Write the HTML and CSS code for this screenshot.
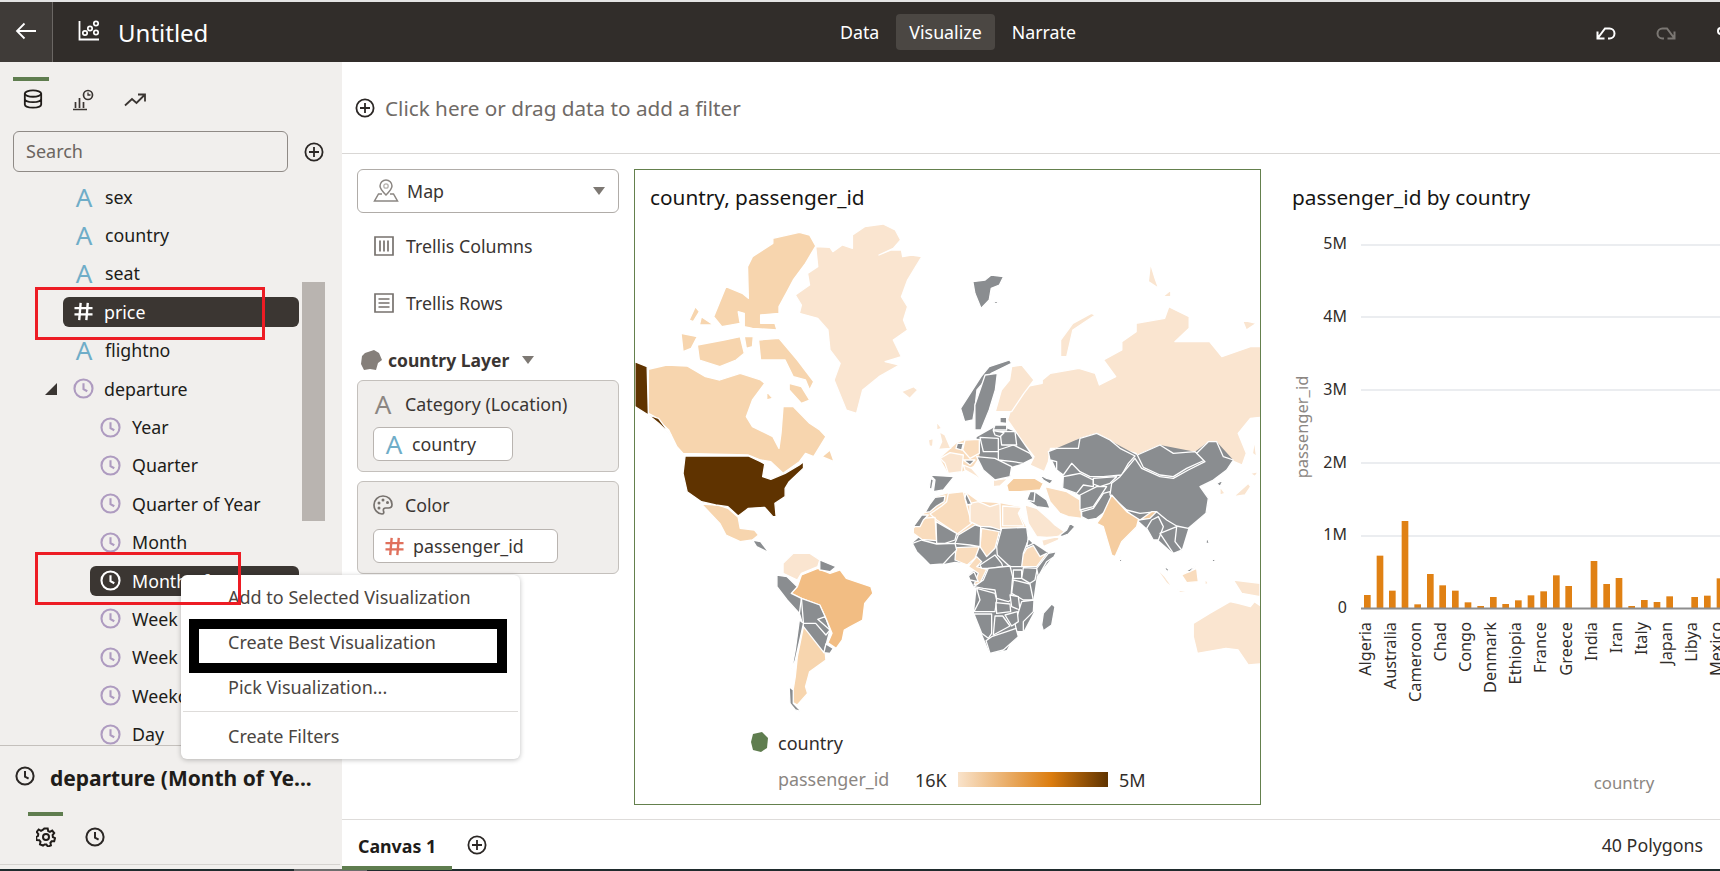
FILE: index.html
```html
<!DOCTYPE html>
<html lang="en">
<head>
<meta charset="utf-8">
<title>Untitled</title>
<link rel="stylesheet" href="styles.css">
</head>
<body>
<svg class="defs" width="0" height="0">
  <defs>
    <symbol id="clock" viewBox="0 0 20 20"><circle cx="10" cy="10" r="8.6" fill="none" stroke="currentColor" stroke-width="2"/><path d="M10 5v5.600l3.600 2" fill="none" stroke="currentColor" stroke-width="2"/></symbol>
    <symbol id="plus" viewBox="0 0 20 20"><circle cx="10" cy="10" r="8.600" fill="none" stroke="currentColor" stroke-width="1.800"/><path d="M10 5v10M5 10h10" fill="none" stroke="currentColor" stroke-width="1.800"/></symbol>
    <symbol id="hash" viewBox="0 0 20 20"><path d="M7 1 5.500 19M14.500 1 13 19M0.500 6.500h19M0.500 13h19" fill="none" stroke="currentColor" stroke-width="2.500"/></symbol>
  </defs>
</svg>
<div class="app">
  <div class="topline"></div>
  <header class="header">
    <button class="back" aria-label="Back"><svg width="24" height="20" viewBox="0 0 24 20"><path d="M22 10H3M10.500 2.500 3 10l7.500 7.500" fill="none" stroke="#fff" stroke-width="1.800"/></svg></button>
    <div class="brand">
      <svg width="22" height="22" viewBox="0 0 22 22"><path d="M1.500 1v18.500H21" fill="none" stroke="#fff" stroke-width="1.800"/><circle cx="7" cy="13" r="2.200" fill="none" stroke="#fff" stroke-width="1.700"/><circle cx="12" cy="8.500" r="2.200" fill="none" stroke="#fff" stroke-width="1.700"/><circle cx="18" cy="3.500" r="2.200" fill="none" stroke="#fff" stroke-width="1.700"/><circle cx="18" cy="12.500" r="2.200" fill="none" stroke="#fff" stroke-width="1.700"/></svg>
      <span class="doc-title">Untitled</span>
    </div>
    <nav class="modes">
      <span class="mode">Data</span>
      <span class="mode mode-on">Visualize</span>
      <span class="mode">Narrate</span>
    </nav>
    <div class="tools">
      <svg width="20" height="14" viewBox="0 0 20 14"><path d="M1.500 5.500v7h7M1.500 12.500 9 2.500h4.500a4.500 4.500 0 0 1 0 10H12" fill="none" stroke="#fff" stroke-width="2"/></svg>
      <svg width="20" height="14" viewBox="0 0 20 14"><path d="M18.500 5.500v7h-7M18.500 12.500 11 2.500H6.500a4.500 4.500 0 0 0 0 10H8" fill="none" stroke="#7b7773" stroke-width="2"/></svg>
      <svg class="more" width="12" height="14" viewBox="0 0 12 14"><circle cx="5" cy="5" r="3" fill="none" stroke="#fff" stroke-width="2"/></svg>
    </div>
  </header>

  <div class="body">
    <aside class="sidebar">
      <div class="side-tabs">
        <span class="side-tab side-tab-on"><svg width="20" height="20" viewBox="0 0 22 22"><ellipse cx="11" cy="5" rx="9" ry="3.500" fill="none" stroke="#201c19" stroke-width="2"/><path d="M2 5v12c0 2 4 3.500 9 3.500s9-1.500 9-3.500V5M2 11c0 2 4 3.500 9 3.500s9-1.500 9-3.500" fill="none" stroke="#201c19" stroke-width="2"/></svg></span>
        <span class="side-tab"><svg width="22" height="22" viewBox="0 0 22 22"><path d="M1 20.500h14M3.500 19v-6M7.500 19V9M11.500 19v-6" fill="none" stroke="#3a3532" stroke-width="1.700"/><circle cx="16" cy="6" r="4.500" fill="none" stroke="#3a3532" stroke-width="1.700"/><path d="M16 3.500V6h2.500" fill="none" stroke="#3a3532" stroke-width="1.300"/></svg></span>
        <span class="side-tab"><svg width="22" height="22" viewBox="0 0 22 22"><path d="M1 16.500 8 10l4.500 4L20.500 6M14 5.500h7v7" fill="none" stroke="#3a3532" stroke-width="1.800"/></svg></span>
      </div>
      <div class="search-row">
        <div class="search">Search</div>
        <svg class="icon-20 ink" aria-hidden="true"><use href="#plus"/></svg>
      </div>
      <div class="tree">
        <div class="row"><span class="glyph-a">A</span><span>sex</span></div>
        <div class="row"><span class="glyph-a">A</span><span>country</span></div>
        <div class="row"><span class="glyph-a">A</span><span>seat</span></div>
        <div class="row"><div class="pill pill-top"><svg class="icon-hash" aria-hidden="true"><use href="#hash"/></svg><span>price</span></div></div>
        <div class="row"><span class="glyph-a">A</span><span>flightno</span></div>
        <div class="row row-parent"><span class="twist"></span><svg class="icon-clock" aria-hidden="true"><use href="#clock"/></svg><span>departure</span></div>
        <div class="row row-child"><svg class="icon-clock" aria-hidden="true"><use href="#clock"/></svg><span>Year</span></div>
        <div class="row row-child"><svg class="icon-clock" aria-hidden="true"><use href="#clock"/></svg><span>Quarter</span></div>
        <div class="row row-child"><svg class="icon-clock" aria-hidden="true"><use href="#clock"/></svg><span>Quarter of Year</span></div>
        <div class="row row-child"><svg class="icon-clock" aria-hidden="true"><use href="#clock"/></svg><span>Month</span></div>
        <div class="row"><div class="pill pill-child"><svg class="icon-clock icon-clock-on" aria-hidden="true"><use href="#clock"/></svg><span>Month of Year</span></div></div>
        <div class="row row-child"><svg class="icon-clock" aria-hidden="true"><use href="#clock"/></svg><span>Week</span></div>
        <div class="row row-child"><svg class="icon-clock" aria-hidden="true"><use href="#clock"/></svg><span>Week</span></div>
        <div class="row row-child"><svg class="icon-clock" aria-hidden="true"><use href="#clock"/></svg><span>Weekday</span></div>
        <div class="row row-child"><svg class="icon-clock" aria-hidden="true"><use href="#clock"/></svg><span>Day</span></div>
        <div class="scrollbar"></div>
      </div>
      <div class="detail">
        <div class="detail-title"><svg class="icon-20 ink" aria-hidden="true"><use href="#clock"/></svg><span class="detail-name">departure (Month of Ye...</span></div>
        <div class="detail-tabs">
          <span class="detail-tab detail-tab-on"><svg width="20" height="20" viewBox="0 0 20 20"><circle cx="10" cy="10" r="3" fill="none" stroke="#201c19" stroke-width="2"/><path d="M8.300 1.500h3.400l.5 2.600 1.700.8 2.300-1.300 2 2.500-1.600 2 .3 1.900 2.100 1.200-.8 3-2.600.1-1.200 1.500.5 2.600-3 1.200-1.500-2.200h-1.800L7 18.500l-3-1.200.5-2.600-1.200-1.500-2.600-.1-.8-3 2.100-1.200.3-1.900-1.600-2 2-2.500 2.300 1.300 1.700-.8z" fill="none" stroke="#201c19" stroke-width="2"/></svg></span>
          <span class="detail-tab"><svg class="icon-20 ink" aria-hidden="true"><use href="#clock"/></svg></span>
        </div>
      </div>
    </aside>

    <main class="main">
      <div class="filter-bar"><svg class="icon-20 ink" aria-hidden="true"><use href="#plus"/></svg><span>Click here or drag data to add a filter</span></div>
      <div class="workspace">
        <section class="config">
          <div class="select">
            <svg width="26" height="24" viewBox="0 0 26 24"><path d="M13 16C9.500 12.500 7 9.500 7 7a6 6 0 0 1 12 0c0 2.500-2.500 5.500-6 9z" fill="none" stroke="#8b8682" stroke-width="1.500"/><circle cx="13" cy="7" r="2.200" fill="none" stroke="#b5b1ad" stroke-width="1.300"/><path d="M9 15H5.500L1.500 22h23l-4-7H17" fill="none" stroke="#8b8682" stroke-width="1.500"/></svg>
            <span class="select-label">Map</span>
            <span class="caret"></span>
          </div>
          <div class="shelf shelf-first"><svg width="20" height="20" viewBox="0 0 20 20"><path d="M1 1h18v18H1zM6 4.500v11M10 4.500v11M14 4.500v11" fill="none" stroke="#77726e" stroke-width="1.700"/></svg><span>Trellis Columns</span></div>
          <div class="shelf"><svg width="20" height="20" viewBox="0 0 20 20"><path d="M1 1h18v18H1zM4.500 6h11M4.500 10h11M4.500 14h11" fill="none" stroke="#77726e" stroke-width="1.700"/></svg><span>Trellis Rows</span></div>
          <div class="layer">
            <svg width="22" height="21" viewBox="0 0 22 21"><path d="M5 3 14 0l5 3 3 7-4 3-2 7-6-1-6 1-3-6 1-8z" fill="#857f7a"/></svg>
            <span class="layer-name">country Layer</span>
            <span class="caret"></span>
          </div>
          <div class="dropbox dropbox-a">
            <div class="dropbox-head"><span class="glyph-a glyph-gray">A</span><span>Category (Location)</span></div>
            <div class="chip chip-a"><span class="glyph-a">A</span><span>country</span></div>
          </div>
          <div class="dropbox dropbox-b">
            <div class="dropbox-head"><svg width="20" height="20" viewBox="0 0 20 20"><path d="M10 1a9 9 0 0 0-9 9c0 5 4 9 8 9 2 0 2-1.500 1.500-3-.5-2 .5-3 2-3h3c2 0 3.500-1 3.500-3.500C19 4.500 15 1 10 1z" fill="none" stroke="#77726e" stroke-width="1.700"/><circle cx="6" cy="8" r="1.500" fill="#77726e"/><circle cx="10" cy="5" r="1.500" fill="#77726e"/><circle cx="14.500" cy="7.500" r="1.500" fill="#77726e"/><circle cx="6" cy="13" r="1.500" fill="#77726e"/></svg><span>Color</span></div>
            <div class="chip chip-b"><svg class="icon-hash icon-hash-red" aria-hidden="true"><use href="#hash"/></svg><span>passenger_id</span></div>
          </div>
        </section>

        <section class="map-panel">
          <svg class="map" viewBox="635 170 625 634" role="img" aria-label="World map">
            <text x="650" y="205" class="viz-title">country, passenger_id</text>
            <g transform="translate(630 160) scale(.40816 .33333)" class="countries">
              <g class="c-vlight">
                <path d="M455,260 490,262 497,275 520,255 545,265 545,225 575,200 620,192 650,210 663,240 645,265 610,285 640,270 665,270 668,290 690,285 715,290 700,320 680,360 665,410 680,440 670,480 680,510 645,540 665,590 625,605 660,615 610,650 570,690 555,760 530,750 500,660 515,610 490,570 485,510 460,475 415,460 420,435 405,405 440,375 435,340 460,320 Z"/>
                <path d="M1010,660 1030,640 1100,625 1140,640 1150,675 1190,650 1160,600 1205,570 1205,545 1240,515 1240,490 1310,475 1320,440 1370,470 1370,505 1335,545 1420,545 1450,590 1520,560 1560,560 1560,770 1520,775 1490,820 1510,880 1500,915 1480,905 1440,870 1420,845 1400,870 1405,905 1330,950 1275,935 1245,900 1240,880 1195,865 1140,830 1095,840 1090,865 1030,865 1025,905 1015,935 980,915 990,890 965,850 925,780 940,720 970,680 1010,670Z"/>
                <path d="M1130,460 1140,465 1085,510 1070,590 1055,590 1055,540 1085,490Z"/>
                <path d="M1275,310 1285,350 1295,385 1270,365Z"/><path d="M1305,410 1325,390 1325,410Z"/><path d="M1500,480 1535,490 1510,510Z"/>
                <path d="M665,695 695,680 705,690 685,715Z"/>
                <path d="M935,620 960,615 990,660 965,700 935,755 895,755 910,690 930,660Z"/>
                <path d="M375,1210 400,1180 440,1180 465,1200 460,1220 420,1240 410,1260 375,1240Z"/>
                <path d="M1380,1390 1420,1360 1470,1325 1490,1330 1520,1340 1530,1325 1560,1350 1560,1510 1515,1515 1490,1470 1460,1465 1390,1480 1380,1430Z"/>
                <path d="M1530,840 1535,890 1525,880Z"/>
              </g>
              <g class="c-light">
                <path d="M350,235 415,217 440,225 455,258 430,310 400,360 385,395 365,440 365,460 320,465 320,490 355,490 360,510 300,505 280,500 280,460 265,455 270,490 225,500 205,470 235,380 275,400 290,415 288,320 300,290 350,250Z"/>
                <path d="M145,480 160,440 170,455 155,485Z"/><path d="M170,495 175,470 205,495Z"/>
                <path d="M125,520 165,530 150,565 130,575Z"/>
                <path d="M165,555 230,540 270,530 280,580 260,600 220,620 170,600Z"/>
                <path d="M280,530 302,530 300,560 285,565Z"/>
                <path d="M315,540 365,535 410,600 450,665 440,690 430,660 400,650 380,600 320,600Z"/>
                <path d="M45,628 90,615 140,618 185,650 220,660 270,640 320,660 330,670 300,720 285,770 300,800 350,830 365,865 370,820 375,740 400,740 440,790 465,810 480,830 450,890 430,880 415,905 375,940 345,905 320,900 290,885 130,880 115,860 95,810 60,770 45,760Z"/>
                <path d="M390,670 420,680 440,720 420,730 390,690Z"/><path d="M335,695 350,715 335,720Z"/><path d="M470,890 490,870 500,905Z"/>
                <path d="M175,1032 215,1035 240,1045 265,1072 270,1105 305,1110 315,1125 300,1140 270,1145 235,1125 220,1090Z"/>
                <path d="M425,1400 450,1395 475,1435 480,1500 440,1535 430,1580 435,1600 410,1635 395,1625 405,1550 410,1490Z"/>
              </g>
              <path class="c-gray" d="M360,1245 410,1280 420,1315 480,1375 490,1410 475,1478 425,1400 415,1360 385,1320 360,1280Z"/>
              <path class="c-brazil" d="M420,1245 460,1225 490,1240 515,1230 530,1255 590,1280 595,1300 575,1330 570,1380 540,1400 525,1410 520,1440 505,1465 485,1448 495,1420 480,1375 465,1335 420,1315 395,1300 410,1280Z"/>
              <g class="c-brown">
                <path d="M12,605 42,620 45,765 12,740Z"/>
                <path d="M45,765 70,775 100,825 70,790Z"/>
                <path d="M135,888 290,888 320,905 330,912 325,950 345,958 380,940 415,915 425,905 425,925 390,965 380,985 380,1010 355,1030 358,1070 350,1070 330,1042 290,1045 265,1068 240,1040 210,1035 175,1025 140,995 130,940Z"/>
              </g>
              <g class="c-gray">
                <path d="M840,365 870,360 885,345 915,350 905,375 885,385 880,420 860,445 845,400Z"/><path d="M897,420 903,430 890,430Z"/>
                <path d="M810,745 860,650 880,620 930,600 935,610 885,640 850,690 845,745 840,780 820,785Z"/>
                <path d="M870,645 900,640 895,690 880,750 860,810 845,810 845,735Z"/>
                <path d="M300,1140 320,1145 345,1185 335,1175 310,1160Z"/>
                <path d="M465,1200 505,1220 490,1235 465,1230Z"/>
                <path d="M360,1245 385,1250 410,1280 395,1300 420,1315 415,1360 385,1320 360,1280Z"/>
                <path d="M420,1315 465,1335 478,1370 460,1378 490,1410 480,1425 455,1390 425,1390Z"/>
                <path d="M415,1380 425,1390 405,1500 395,1535 405,1470Z"/>
                <path d="M390,1580 400,1590 400,1630 420,1655 405,1650 392,1630Z"/>
                <path d="M480,1452 498,1465 490,1480 475,1478Z"/>
              </g>
            </g>
            <g transform="translate(880 380) scale(.33333)" class="countries">
              <g class="under c-gray">
                <path d="M97,490 170,425 235,465 300,440 365,445 440,442 445,480 505,520 530,515 470,590 460,660 462,695 430,755 410,755 380,810 330,820 305,760 282,700 290,625 282,620 265,588 300,555 225,545 190,552 150,555 110,515Z"/>
                <path d="M290,172 355,135 405,155 450,220 460,235 430,250 395,260 390,290 345,300 310,270 290,230Z"/>
                <path d="M505,215 600,175 650,160 770,225 840,195 945,215 985,185 1010,185 1060,240 1000,300 960,320 985,355 978,400 925,445 905,510 880,520 835,480 800,445 740,390 695,345 675,395 650,415 605,410 600,345 548,325 550,285 530,270Z"/>
              </g>
              <g class="under c-pale">
                <path d="M135,398 165,352 205,340 260,340 295,365 360,370 425,382 415,400 440,445 300,440 235,465 170,425 125,415 100,445Z"/>
                <path d="M180,235 230,190 255,180 298,178 298,230 280,258 245,275 205,280Z"/>
              </g>
              <g class="c-pale">
                <path d="M205,340 250,335 260,375 275,430 232,462 170,420 150,402 185,378 200,365Z"/>
                <path d="M125,415 165,412 170,482 125,478 100,460 100,445Z"/>
                <path d="M228,503 298,500 285,535 262,555 225,540Z"/>
                <path d="M305,445 358,455 345,505 320,530 300,500Z"/>
                <path d="M265,560 290,530 305,545 290,560 320,568 300,610 282,615 295,580Z"/>
                <path d="M460,497 480,530 500,520 470,560 425,560 420,540 440,505Z"/>
                <path d="M255,180 298,178 298,220 270,235 248,210Z"/>
                <path d="M495,320 560,335 600,360 605,415 565,410 540,400 510,365Z"/>
                <path d="M905,585 950,565 955,605 920,608Z"/>
              </g>
              <g class="c-vlight">
                <path d="M270,370 295,365 330,380 360,370 362,450 330,440 302,440 270,425Z"/>
                <path d="M368,378 425,382 415,400 432,438 368,437Z"/>
                <path d="M435,375 470,385 510,420 525,435 560,460 535,470 500,472 470,470 445,430Z"/>
                <path d="M485,480 540,468 535,480 490,500Z"/>
                <path d="M178,155 195,165 212,205 175,208 185,185Z"/><path d="M145,180 160,175 158,200 148,198Z"/><path d="M170,125 185,145 170,150Z"/>
                <path d="M180,235 210,218 250,225 245,275 205,280 195,250Z"/>
                <path d="M250,255 275,265 310,305 290,290 255,270Z"/>
                <path d="M340,300 385,295 360,318 340,320Z"/>
                <path d="M825,560 855,590 880,625 860,610Z"/><path d="M885,628 925,635 900,637Z"/>
                <path d="M975,595 985,610 975,615Z"/>
                <path d="M1060,600 1140,610 1140,650 1085,640Z"/>
                <path d="M1020,320 1035,340 1020,345Z"/>
                <path d="M1060,350 1105,310 1112,320 1095,345Z"/><path d="M1110,280 1135,275 1125,290Z"/>
                <path d="M378,785 392,780 388,795Z"/>
              </g>
              <g class="c-gray">
                <path d="M195,348 165,352 150,372 135,398 150,395 170,378 192,365Z"/>
                <path d="M258,338 275,372 262,375 255,355Z"/>
                <path d="M100,440 125,405 145,405 130,420 120,440Z"/>
                <path d="M168,425 230,460 225,480 195,490 170,490Z"/>
                <path d="M235,465 285,435 302,440 300,500 270,495 225,490Z"/>
                <path d="M365,445 440,442 445,480 430,520 425,560 390,560 352,525 350,500Z"/>
                <path d="M97,490 125,480 170,492 225,490 230,510 210,530 190,552 150,555 130,535 110,515Z"/>
                <path d="M300,555 345,525 365,550 368,560 330,565 305,565Z"/>
                <path d="M265,588 282,575 295,605 270,600Z"/>
                <path d="M325,565 390,558 398,590 392,660 385,665 350,655 345,630 310,625 282,620 310,600Z"/>
                <path d="M400,570 425,570 425,595 400,595Z"/><path d="M430,563 472,565 465,600 450,610 425,595Z"/>
                <path d="M530,515 505,520 470,565 475,590 500,545 522,530Z"/>
                <path d="M445,475 460,490 440,500Z"/>
                <path d="M400,600 450,612 460,660 430,660 395,640Z"/>
                <path d="M290,625 345,640 350,660 345,695 282,695 300,660Z"/>
                <path d="M348,668 390,672 392,695 350,700Z"/>
                <path d="M390,645 415,650 420,690 395,680Z"/>
                <path d="M425,665 462,660 460,695 430,725 430,755 410,755 405,730Z"/>
                <path d="M282,702 335,702 335,760 325,775 305,760Z"/>
                <path d="M345,708 368,708 390,738 340,765Z"/>
                <path d="M375,705 412,695 415,725 395,738Z"/>
                <path d="M318,782 335,770 380,755 408,745 415,770 370,810 330,820Z"/>
                <path d="M515,672 525,680 515,735 490,752 485,735 490,700Z"/>
                <path d="M570,430 585,440 565,462 545,470 540,465 560,450Z"/>
                <path d="M465,335 500,360 510,385 470,380 440,360Z"/><path d="M450,335 465,335 462,365 440,360Z"/>
                <path d="M475,282 500,295 520,300 510,312 490,300Z"/>
                <path d="M355,210 400,195 450,220 460,235 430,250 400,245 355,240Z"/>
                <path d="M360,155 405,155 410,195 365,195Z"/>
                <path d="M360,112 380,112 380,130 360,128Z"/><path d="M345,135 380,135 380,150 340,150Z"/><path d="M340,152 372,158 360,170 345,165Z"/>
                <path d="M300,172 355,175 355,215 310,215Z"/>
                <path d="M150,285 222,290 190,330 160,335 165,300Z"/><path d="M152,295 160,300 155,328 148,325Z"/>
                <path d="M290,230 345,235 395,260 390,290 345,300 310,270Z"/>
                <path d="M232,190 250,190 245,210 228,205Z"/><path d="M250,240 285,240 270,255Z"/>
                <path d="M505,215 530,205 595,205 600,175 650,160 690,180 720,205 765,228 745,250 725,285 670,290 630,290 600,275 575,250 550,285 530,270 530,245 510,240Z"/>
                <path d="M550,290 575,285 600,280 640,300 640,320 610,315 590,340 548,325Z"/>
                <path d="M640,295 710,290 690,310 660,320 640,312Z"/>
                <path d="M600,345 650,320 680,320 660,350 640,380 600,390Z"/>
                <path d="M605,395 640,385 670,340 690,335 695,360 675,395 650,415 625,420 605,410Z"/>
                <path d="M772,225 840,195 880,220 945,215 975,240 920,265 880,290 840,285 790,262Z"/>
                <path d="M765,235 785,265 840,290 880,295 925,270 975,245 950,220 985,185 1010,185 1030,230 1060,240 1040,270 1000,300 960,320 985,355 978,400 925,445 890,438 860,420 830,395 780,400 740,390 690,345 695,310 720,290Z"/>
                <path d="M1010,310 1030,300 1020,320Z"/>
                <path d="M720,530 727,545 718,545Z"/>
                <path d="M815,420 835,410 850,440 835,480 820,480 800,445Z"/>
                <path d="M840,460 890,440 885,485 905,510 880,520 860,490Z"/>
                <path d="M850,555 868,570 860,575Z"/><path d="M915,575 950,555 930,575Z"/>
                <path d="M980,470 988,490 978,490Z"/><path d="M1000,535 1008,545 995,545Z"/>
              </g>
              <g class="c-mid">
                <path d="M380,315 400,295 465,295 490,310 480,330 420,335 385,335Z"/>
                <path d="M695,345 740,395 780,420 815,395 830,395 810,415 775,420 770,440 725,485 705,530 695,525 670,440 650,430 665,410Z"/>
              </g>
            </g>
            <path class="legend-blob" d="M753 734 762 732 768 738 767 748 761 752 753 750 751 742z"/>
            <text x="778" y="750" class="legend-dark">country</text>
            <text x="778" y="786" class="legend-gray">passenger_id</text>
            <text x="915" y="787" class="legend-dark">16K</text>
            <defs><linearGradient id="ramp"><stop offset="0" stop-color="#f9e3cb"/><stop offset=".62" stop-color="#dc7d0f"/><stop offset="1" stop-color="#5f3300"/></linearGradient></defs>
            <rect x="958" y="772" width="150" height="15" fill="url(#ramp)"/>
            <text x="1119" y="787" class="legend-dark">5M</text>
          </svg>
        </section>

        <section class="chart-panel">
          <svg class="chart" viewBox="1261 169 459 636" role="img" aria-label="Bar chart">
            <text x="1292" y="205" class="viz-title">passenger_id by country</text>
            <g class="grid">
              <path d="M1361 245H1720M1361 317H1720M1361 390H1720M1361 463H1720M1361 536H1720"/>
            </g>
            <g class="y-labels">
              <text x="1347" y="249">5M</text><text x="1347" y="322">4M</text><text x="1347" y="395">3M</text><text x="1347" y="468">2M</text><text x="1347" y="540">1M</text><text x="1347" y="613">0</text>
            </g>
            <text class="axis-title" transform="translate(1308 427) rotate(-90)" text-anchor="middle">passenger_id</text>
            <g transform="translate(1270 470) scale(.33333)" class="bars">
              <rect x="282" y="375" width="20" height="40"/><rect x="320" y="257" width="20" height="158"/><rect x="357" y="362" width="20" height="53"/><rect x="395" y="153" width="20" height="262"/><rect x="433" y="403" width="20" height="12"/><rect x="471" y="312" width="20" height="103"/><rect x="508" y="346" width="20" height="69"/><rect x="546" y="362" width="20" height="53"/><rect x="584" y="397" width="20" height="18"/><rect x="622" y="408" width="20" height="7"/><rect x="660" y="381" width="20" height="34"/><rect x="697" y="402" width="20" height="13"/><rect x="735" y="391" width="20" height="24"/><rect x="773" y="376" width="20" height="39"/><rect x="811" y="364" width="20" height="51"/><rect x="849" y="316" width="20" height="99"/><rect x="886" y="348" width="20" height="67"/><rect x="962" y="273" width="20" height="142"/><rect x="1000" y="342" width="20" height="73"/><rect x="1037" y="324" width="20" height="91"/><rect x="1075" y="408" width="20" height="7"/><rect x="1113" y="390" width="20" height="25"/><rect x="1151" y="396" width="20" height="19"/><rect x="1189" y="379" width="20" height="36"/><rect x="1264" y="381" width="20" height="34"/><rect x="1302" y="377" width="20" height="38"/><rect x="1340" y="325" width="20" height="90"/>
            </g>
            <path class="baseline" d="M1361 608.500H1720"/>
            <g class="x-labels">
              <text transform="translate(1370.500 622) rotate(-90)">Algeria</text>
              <text transform="translate(1396 622) rotate(-90)">Australia</text>
              <text transform="translate(1421 622) rotate(-90)">Cameroon</text>
              <text transform="translate(1446 622) rotate(-90)">Chad</text>
              <text transform="translate(1471 622) rotate(-90)">Congo</text>
              <text transform="translate(1496 622) rotate(-90)">Denmark</text>
              <text transform="translate(1521 622) rotate(-90)">Ethiopia</text>
              <text transform="translate(1546 622) rotate(-90)">France</text>
              <text transform="translate(1572 622) rotate(-90)">Greece</text>
              <text transform="translate(1597 622) rotate(-90)">India</text>
              <text transform="translate(1622 622) rotate(-90)">Iran</text>
              <text transform="translate(1647 622) rotate(-90)">Italy</text>
              <text transform="translate(1672 622) rotate(-90)">Japan</text>
              <text transform="translate(1697 622) rotate(-90)">Libya</text>
              <text transform="translate(1722 622) rotate(-90)">Mexico</text>
            </g>
            <text x="1624" y="789" class="axis-title axis-title-x" text-anchor="middle">country</text>
          </svg>
        </section>
      </div>
      <div class="canvas-tabs">
        <span class="canvas-tab">Canvas 1</span>
        <svg class="icon-20 ink" aria-hidden="true"><use href="#plus"/></svg>
        <span class="polygons">40 Polygons</span>
      </div>
    </main>
  </div>
  <div class="strip"><span class="strip-seg"></span></div>

  <div class="menu">
    <div class="menu-item menu-first">Add to Selected Visualization</div>
    <div class="menu-item menu-best">Create Best Visualization</div>
    <div class="menu-item">Pick Visualization...</div>
    <div class="menu-sep"></div>
    <div class="menu-item menu-last">Create Filters</div>
  </div>
  <div class="mark mark-price"></div>
  <div class="mark mark-month"></div>
</div>
</body>
</html>
```
FILE: styles.css
```css
* { box-sizing: border-box; }
html, body { margin: 0; padding: 0; height: 100%; overflow: hidden; background: #fff; }
body { font-family: "Noto Sans", "Open Sans", sans-serif; font-size: 17.800px; color: #201c19; }
.defs { position: absolute; }

.app { position: relative; width: 1720px; height: 871px; display: flex; flex-direction: column; overflow: hidden; }
.topline { height: 2px; background: #e4e4e4; flex: none; }
.strip { height: 2px; flex: none; background: #1f2b2d; padding-left: 294px; display: flex; }
.strip-seg { width: 73px; background: #6e6e6e; }

.header { height: 60px; flex: none; background: #312d2a; color: #fff; display: flex; align-items: center; position: relative; }
.back { width: 53px; height: 60px; background: #3f3b38; border: 0; border-right: 1px solid #6b6764; padding: 0 0 3px; display: flex; align-items: center; justify-content: center; }
.brand { display: flex; align-items: center; gap: 18px; padding-left: 25px; }
.brand svg { margin-top: -3px; }
.doc-title { font-size: 24px; line-height: 32px; margin-top: 2px; }
.modes { position: absolute; left: 827px; top: 12px; display: flex; align-items: center; gap: 4px; }
.mode { height: 36px; padding: 0 13px; display: flex; align-items: center; font-size: 17.800px; border-radius: 4px; }
.mode-on { background: #4b4743; }
.tools { margin-left: auto; display: flex; align-items: center; gap: 40px; margin-right: -8px; margin-top: 2px; }

.body { flex: 1; display: flex; min-height: 0; }
.sidebar { width: 342px; flex: none; background: #f1efed; display: flex; flex-direction: column; }
.side-tabs { display: flex; height: 69px; padding-left: 14px; padding-top: 15px; }
.side-tab { width: 36px; padding-top: 12px; display: flex; justify-content: center; margin-right: 16px; height: 40px; }
.side-tab-on { border-top: 4px solid #5f7d4f; padding: 8px 0 0 3px; margin-left: -1px; }
.search-row { display: flex; align-items: center; gap: 16px; padding-left: 13px; height: 41px; }
.search { width: 275px; height: 41px; border: 1px solid #8f8a86; border-radius: 6px; padding-left: 12px; line-height: 38px; color: #6b6560; font-size: 18px; }
.icon-20 { width: 20px; height: 20px; flex: none; }
.ink { color: #2b2725; }

.tree { position: relative; height: 567px; margin-top: 5.500px; overflow: hidden; flex: none; }
.row { height: 38.400px; display: flex; align-items: center; padding-left: 75px; gap: 12px; white-space: nowrap; }
.row-child { padding-left: 100px; gap: 11px; }
.row-parent { padding-left: 73px; gap: 10px; }
.glyph-a { font-size: 26px; font-weight: 400; line-height: 24px; color: #6fadc8; width: 18px; text-align: center; flex: none; }
.glyph-gray { color: #8b8682; }
.icon-clock { width: 21px; height: 21px; color: #ae9bc0; flex: none; }
.icon-clock-on { color: #fff; }
.icon-hash { width: 19px; height: 19px; color: #fff; flex: none; }
.icon-hash-red { color: #e0705c; }
.twist { position: absolute; left: 45px; width: 0; height: 0; border-style: solid; border-width: 0 0 12px 12px; border-color: transparent transparent #3a3532 transparent; }
.pill { background: #3b3632; color: #fff; height: 30px; border-radius: 6px; display: flex; align-items: center; gap: 11px; }
.pill-top { width: 236px; margin-left: -12px; padding-left: 11px; }
.pill-child { width: 209px; margin-left: 15px; padding-left: 10px; gap: 11px; }
.scrollbar { position: absolute; left: 302px; top: 104px; width: 23px; height: 239px; background: #b9b4b0; }

.detail { flex: 1; border-top: 1px solid #c4c0bc; position: relative; }
.detail::after { content: ""; position: absolute; left: 0; right: 2px; bottom: 4px; height: 1px; background: #d6d3d0; }
.detail-title { display: flex; align-items: center; gap: 15px; padding: 12px 0 0 15px; height: 52px; }
.detail-title .icon-20 { margin-top: -4px; }
.detail-name { font-size: 21px; font-weight: 700; line-height: 28px; white-space: nowrap; }
.detail-tabs { display: flex; padding-left: 28px; margin-top: 14px; }
.detail-tab { width: 35px; height: 44px; padding-top: 15px; display: flex; justify-content: center; margin-right: 14px; }
.detail-tab-on { border-top: 4px solid #5f7d4f; padding-top: 11px; }

.main { flex: 1; min-width: 0; display: flex; flex-direction: column; background: #fff; }
.filter-bar { height: 92px; flex: none; border-bottom: 1px solid #d9d7d5; display: flex; align-items: center; gap: 10px; padding: 1px 0 0 13px; font-size: 20.700px; color: #6f6a66; }
.workspace { flex: 1; display: flex; min-height: 0; padding: 15px 0 14px 15px; gap: 15px; }

.config { width: 262px; flex: none; display: flex; flex-direction: column; color: #3a3532; }
.select { height: 44px; flex: none; border: 1px solid #b0aca8; border-radius: 6px; display: flex; align-items: center; padding: 0 13px 0 15px; gap: 8px; }
.select-label { flex: 1; }
.caret { width: 0; height: 0; border-style: solid; border-width: 8px 6.500px 0 6.500px; border-color: #7d7873 transparent transparent transparent; }
.shelf { height: 57.500px; flex: none; display: flex; align-items: center; gap: 12px; padding-left: 17px; }
.shelf-first { margin-top: 4px; }
.layer { height: 48px; flex: none; display: flex; align-items: center; gap: 7px; padding: 8px 0 0 3px; }
.layer-name { font-weight: 700; font-size: 17.500px; margin-right: 6px; margin-left: -1px; }
.dropbox { background: #f0eeec; border: 1px solid #c4c0bc; border-radius: 6px; padding: 8px 15px 0; flex: none; }
.dropbox-a { height: 92px; margin-bottom: 9px; }
.dropbox-b { height: 93px; }
.dropbox-head { display: flex; align-items: center; gap: 12px; height: 30px; }
.dropbox-head .glyph-a { width: 20px; }
.chip { background: #fff; border: 1px solid #b9b4b0; border-radius: 6px; height: 34px; display: flex; align-items: center; gap: 9px; padding-left: 11px; margin-top: 8px; }
.chip-a { width: 140px; }
.chip-b { width: 185px; margin-top: 9px; }

.map-panel { width: 627px; flex: none; border: 1px solid #64804d; overflow: hidden; }
.map { display: block; width: 625px; height: 634px; }
.viz-title { font-size: 20.800px; fill: #161513; }
.countries path { stroke: #fff; stroke-width: 1.300; vector-effect: non-scaling-stroke; stroke-linejoin: round; }
.countries .under path { stroke: none; }
.c-vlight { fill: #fae5d0; }
.c-pale { fill: #f9dcbd; }
.c-light { fill: #f7d5ae; }
.c-mid { fill: #f5cda0; }
.c-brazil { fill: #f2bd83; }
.c-brown { fill: #5f3300; }
.c-gray { fill: #8a8d90; }
.legend-blob { fill: #5f7d4f; }
.legend-dark { font-size: 18px; fill: #312d2a; }
.legend-gray { font-size: 17.900px; fill: #8b8682; }

.chart-panel { flex: 1; min-width: 0; margin-left: -15px; overflow: hidden; }
.chart { display: block; width: 459px; height: 636px; }
.grid path { stroke: #e5e8ec; stroke-width: 1.500; fill: none; }
.y-labels text { font-size: 16px; fill: #312d2a; text-anchor: end; }
.x-labels text { font-size: 16.300px; fill: #312d2a; text-anchor: end; }
.axis-title { font-size: 16.500px; fill: #8b8682; }
.axis-title-x { font-size: 16.800px; }
.bars rect { fill: #e08114; }
.baseline { stroke: #8e8e8e; stroke-width: 2; fill: none; }

.canvas-tabs { height: 50px; flex: none; border-top: 1px solid #dedcda; display: flex; align-items: center; position: relative; padding-right: 17px; }
.canvas-tab { width: 110px; height: 50px; padding: 11px 0 0 16px; font-weight: 700; border-bottom: 4px solid #5f7d4f; margin-right: 15px; line-height: 30px; }
.polygons { margin-left: auto; color: #312d2a; }

.menu { position: absolute; left: 181px; top: 575px; width: 339px; height: 184px; background: #fff; border-radius: 6px; box-shadow: 0 1px 5px rgba(0,0,0,.25); color: #4a4541; font-size: 18px; }
.menu-item { height: 45px; display: flex; align-items: center; padding-left: 47px; }
.menu-first { height: 44px; }
.menu-best { position: relative; z-index: 1; margin-left: 8px; margin-right: 13px; padding-left: 29px; padding-bottom: 9px; height: 54px; border: 10px solid #000; background: #fff; margin-bottom: -9px; }
.menu-sep { height: 1px; background: #dedcda; margin: 2px 2px 3px; }
.menu-last { height: 42px; }
.mark { position: absolute; border: 3px solid #ed1c24; pointer-events: none; }
.mark-price { left: 35px; top: 287px; width: 230px; height: 53px; }
.mark-month { left: 35px; top: 552px; width: 206px; height: 53px; }
```
